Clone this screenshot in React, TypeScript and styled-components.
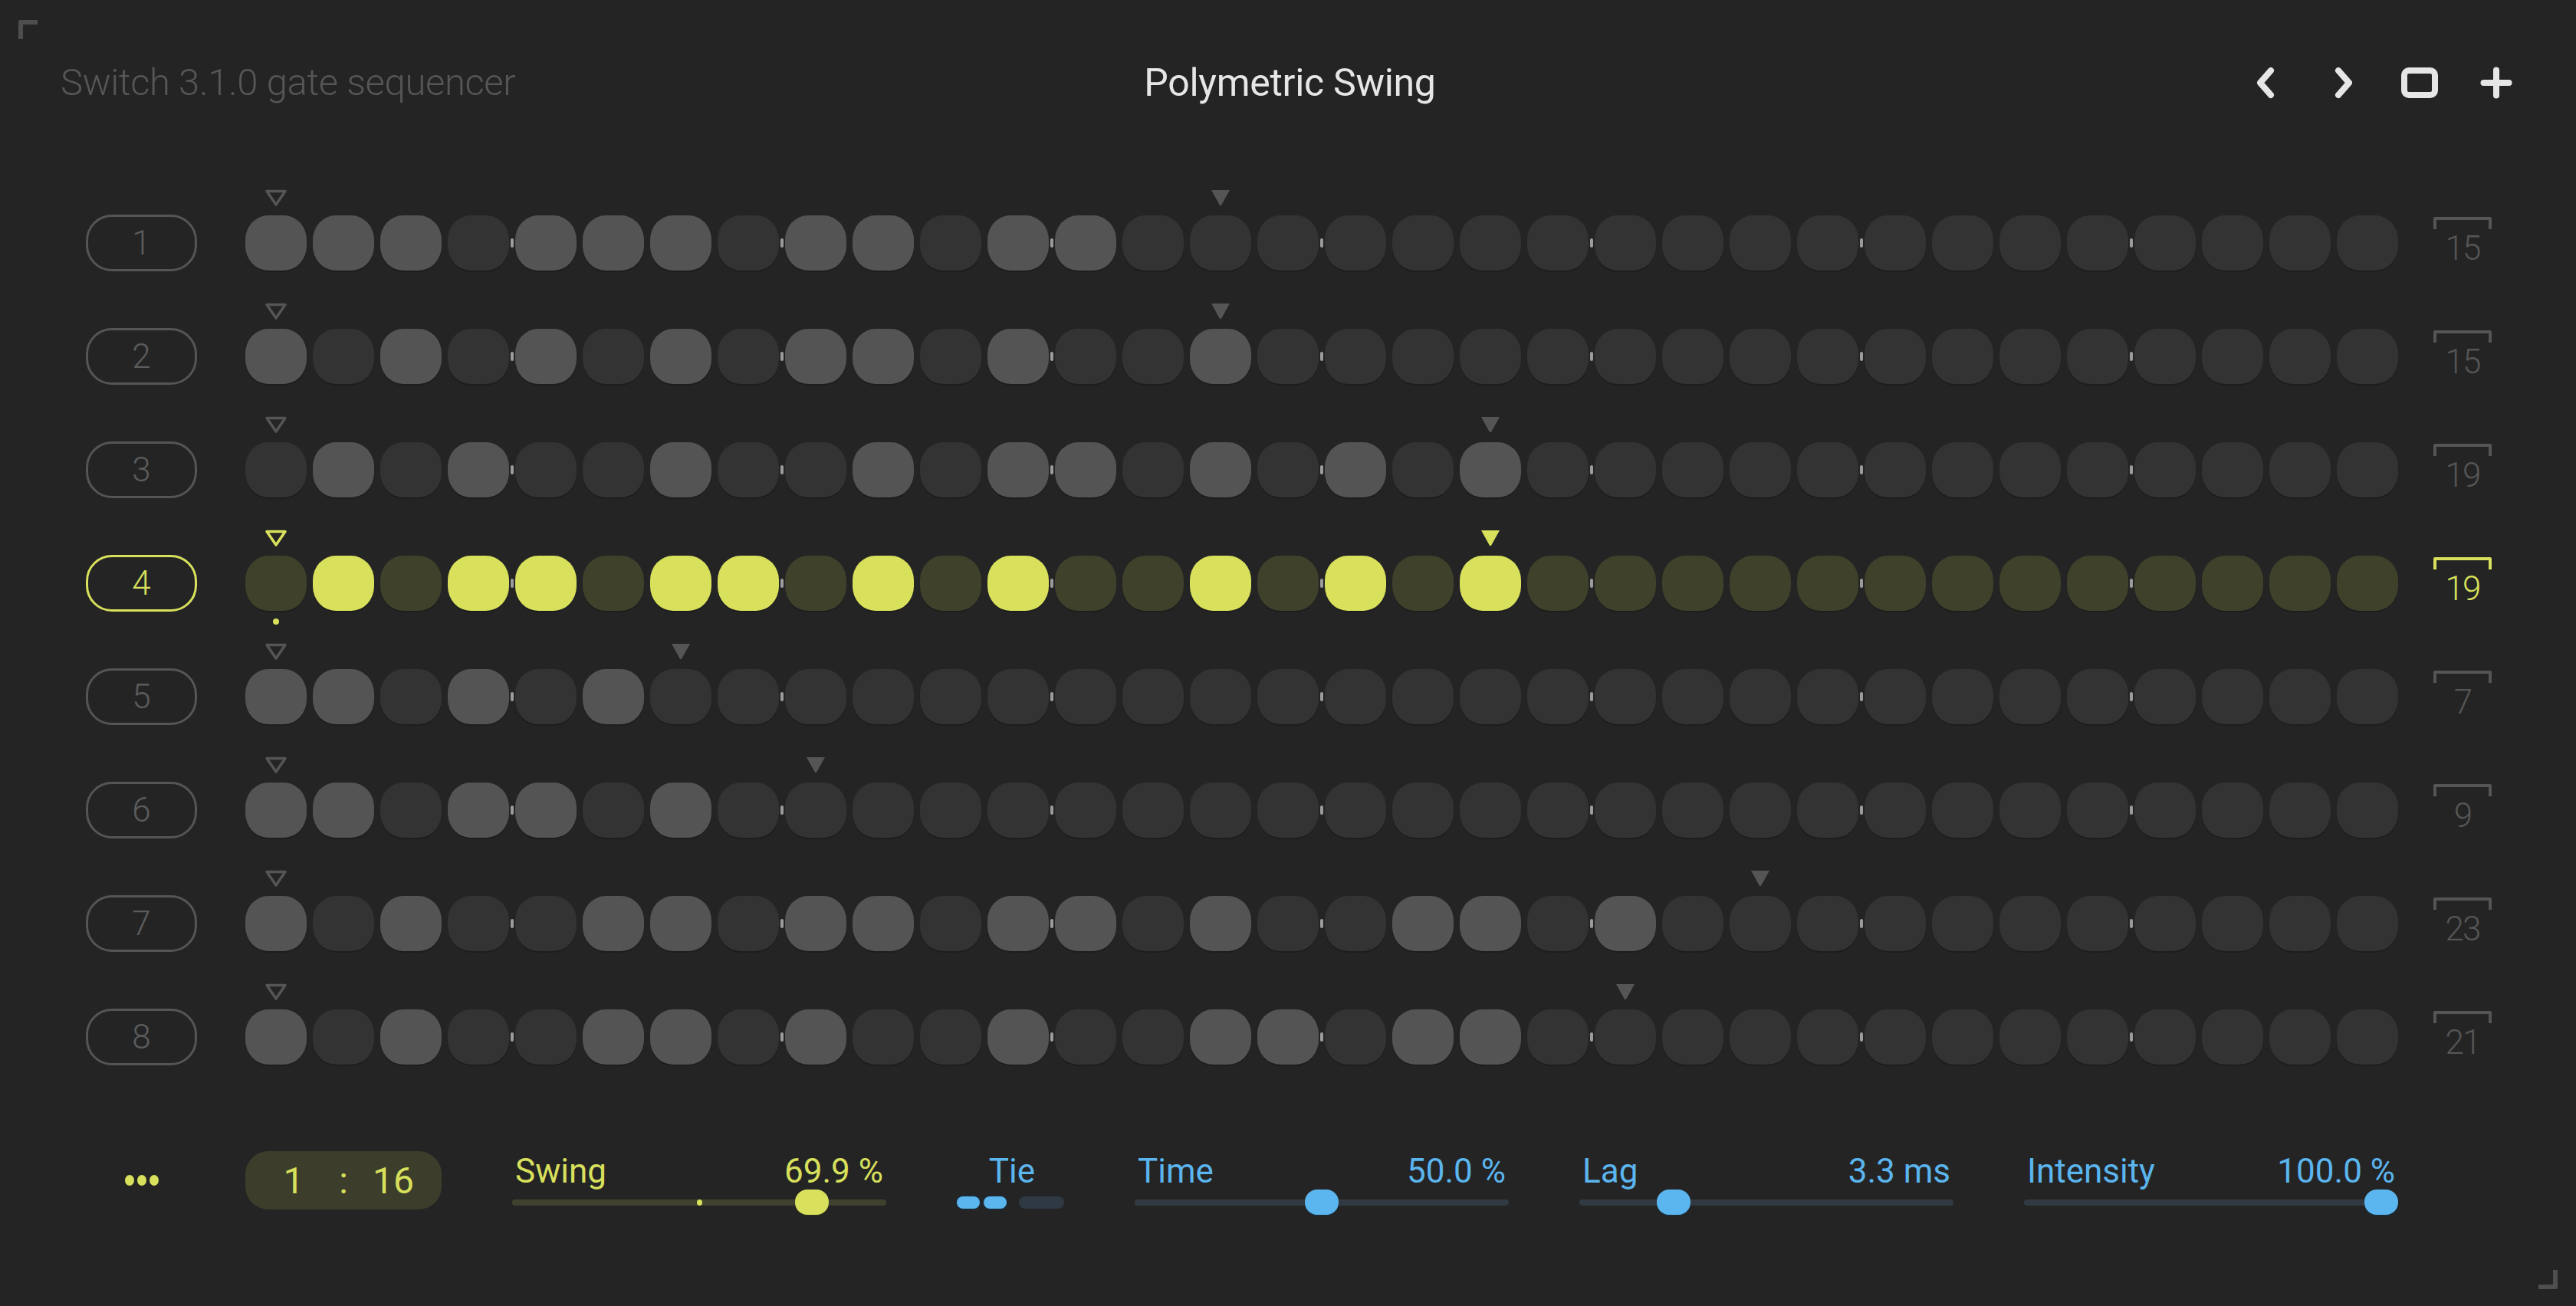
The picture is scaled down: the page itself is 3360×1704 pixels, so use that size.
import * as React from "react"
import styled, { createGlobalStyle, css } from "styled-components"

const YELLOW = "#d8e05c"
const OLIVE = "#3f412b"
const BLUE = "#5bb5ee"
const GRAY_ON = "#545454"
const GRAY_OFF = "#333333"
const DIM = "#555555"

const tracks = [
  { steps: "111011101101100", len: 15 },
  { steps: "101010101101001", len: 15 },
  { steps: "0101001001011010101", len: 19 },
  { steps: "0101101101010010101", len: 19, active: true },
  { steps: "1101010", len: 7 },
  { steps: "110110100", len: 9 },
  { steps: "10100110110110100110100", len: 23 },
  { steps: "101001101001001101100", len: 21 },
]

const GlobalStyle = createGlobalStyle`
  * { box-sizing: border-box; }
  body {
    margin: 0;
    background: #242424;
  }
`

function App() {
  return (
    <Page>
      <GlobalStyle />
      <CornerTL />
      <CornerBR />
      <Header>
        <Subtitle>Switch 3.1.0 gate sequencer</Subtitle>
        <Title>Polymetric Swing</Title>
        <Icons>
          <IconButton>
            <svg width="60" height="60" viewBox="0 0 60 60">
              <path d="M36 14 L22 30 L36 46" />
            </svg>
          </IconButton>
          <IconButton>
            <svg width="60" height="60" viewBox="0 0 60 60">
              <path d="M24 14 L38 30 L24 46" />
            </svg>
          </IconButton>
          <IconButton>
            <svg width="60" height="60" viewBox="0 0 60 60">
              <rect x="10" y="14" width="40" height="32" rx="6" />
            </svg>
          </IconButton>
          <IconButton>
            <svg width="60" height="60" viewBox="0 0 60 60">
              <path d="M13.5 30 H46.5 M30 13.5 V46.5" />
            </svg>
          </IconButton>
        </Icons>
      </Header>

      <Rows>
        {tracks.map((t, r) => {
          const cells = t.steps.padEnd(32, "0").split("")
          return (
            <Row key={r}>
              <TrackButton $active={t.active}>{r + 1}</TrackButton>
              <Steps>
                {cells.map((c, i) => (
                  <StepCol key={i}>
                    <MarkerSlot>
                      {i === 0 && (
                        <Triangle $active={t.active} viewBox="0 0 30 24">
                          <path d="M3 3.5 H27 L15 21 Z" fill="none" strokeWidth="3.5" strokeLinejoin="round" />
                        </Triangle>
                      )}
                      {i === t.len - 1 && (
                        <Triangle $active={t.active} viewBox="0 0 30 24">
                          <path d="M3 2 H27 L16.2 21.5 Q15 23 13.8 21.5 Z" stroke="none" />
                        </Triangle>
                      )}
                    </MarkerSlot>
                    <Cell $on={c === "1"} $active={t.active} $tick={i % 4 === 3 && i < 31} />
                    <BelowSlot>{t.active && i === 0 && <PlayDot />}</BelowSlot>
                  </StepCol>
                ))}
              </Steps>
              <LengthLabel $active={t.active}>
                <Bracket />
                <LengthNum>{t.len}</LengthNum>
              </LengthLabel>
            </Row>
          )
        })}
      </Rows>

      <BottomBar>
        <DotsCol>
          <Dot />
          <Dot />
          <Dot />
        </DotsCol>
        <Controls>
          <Counter>
            <span>1</span>
            <span>:</span>
            <span>16</span>
          </Counter>
          <Slider label="Swing" value="69.9 %" pct={0.83} tone="yellow" marker />
          <TieGroup>
            <TieLabel>Tie</TieLabel>
            <TieRow>
              <TieSeg $on />
              <TieSeg $on />
              <TieSeg $wide />
            </TieRow>
          </TieGroup>
          <Slider label="Time" value="50.0 %" pct={0.5} tone="blue" />
          <Slider label="Lag" value="3.3 ms" pct={0.228} tone="blue" />
          <Slider label="Intensity" value="100.0 %" pct={1} tone="blue" />
        </Controls>
      </BottomBar>
    </Page>
  )
}

type SliderProps = {
  label: string
  value: string
  pct: number
  tone: "yellow" | "blue"
  marker?: boolean
}

function Slider({ label, value, pct, tone, marker }: SliderProps) {
  return (
    <SliderGroup $tone={tone}>
      <SliderHead>
        <span>{label}</span>
        <span>{value}</span>
      </SliderHead>
      <TrackArea>
        <Track $tone={tone}>
          {marker && <CenterMark />}
        </Track>
        <Thumb $tone={tone} style={{ left: `calc(${pct} * (100% - 44px))` }} />
      </TrackArea>
    </SliderGroup>
  )
}

const Page = styled.div`
  position: relative;
  width: 3360px;
  height: 1704px;
  background: #242424;
  font-family: Roboto, "Liberation Sans", sans-serif;
  display: flex;
  flex-direction: column;
  overflow: hidden;
`

const CornerTL = styled.div`
  position: absolute;
  top: 26px;
  left: 24px;
  width: 25px;
  height: 25px;
  border-top: 6px solid #4e4e4e;
  border-left: 6px solid #4e4e4e;
  border-top-left-radius: 3px;
`

const CornerBR = styled.div`
  position: absolute;
  bottom: 22px;
  right: 24px;
  width: 25px;
  height: 25px;
  border-bottom: 6px solid #4e4e4e;
  border-right: 6px solid #4e4e4e;
  border-bottom-right-radius: 3px;
`

const Header = styled.div`
  height: 243px;
  padding: 0 74px 28px 79px;
  display: grid;
  grid-template-columns: 1fr auto 1fr;
  align-items: center;
`

const Subtitle = styled.div`
  justify-self: start;
  color: #565656;
  font-size: 49px;
  font-weight: 300;
  letter-spacing: -0.4px;
`

const Title = styled.div`
  color: #e6e6e6;
  font-size: 50px;
  font-weight: 400;
  letter-spacing: -0.3px;
`

const Icons = styled.div`
  justify-self: end;
  display: flex;
  gap: 40px;
`

const IconButton = styled.div`
  width: 60px;
  height: 60px;
  display: flex;
  align-items: center;
  justify-content: center;

  svg {
    fill: none;
    stroke: #e6e6e6;
    stroke-width: 8;
    stroke-linecap: round;
    stroke-linejoin: round;
  }
`

const Rows = styled.div`
  display: flex;
  flex-direction: column;
  padding-left: 112px;
`

const Row = styled.div`
  display: flex;
  align-items: center;
  height: 148px;
`

const TrackButton = styled.div<{ $active?: boolean }>`
  width: 145px;
  height: 74px;
  margin-right: 63px;
  border: 3px solid ${(p) => (p.$active ? YELLOW : DIM)};
  border-radius: 34px;
  color: ${(p) => (p.$active ? YELLOW : "#5c5c5c")};
  font-size: 44px;
  font-weight: 300;
  display: flex;
  align-items: center;
  justify-content: center;
`

const Steps = styled.div`
  display: flex;
  gap: 8px;
`

const StepCol = styled.div`
  width: 80px;
  height: 148px;
  display: flex;
  flex-direction: column;
  align-items: center;
`

const MarkerSlot = styled.div`
  height: 38px;
  width: 100%;
  display: flex;
  align-items: flex-end;
  justify-content: center;
  padding-bottom: 11px;
`

const Triangle = styled.svg<{ $active?: boolean }>`
  width: 30px;
  height: 24px;
  fill: ${(p) => (p.$active ? YELLOW : DIM)};
  stroke: ${(p) => (p.$active ? YELLOW : DIM)};
`

const Cell = styled.div<{ $on: boolean; $active?: boolean; $tick: boolean }>`
  position: relative;
  width: 80px;
  height: 72px;
  border-radius: 30px / 32px;
  background: ${(p) =>
    p.$active ? (p.$on ? YELLOW : OLIVE) : p.$on ? GRAY_ON : GRAY_OFF};
  box-shadow: 0 2px 0 rgba(0, 0, 0, 0.18);

  ${(p) =>
    p.$tick &&
    css`
      &::after {
        content: "";
        position: absolute;
        right: -6px;
        top: 30px;
        width: 4px;
        height: 12px;
        border-radius: 2px;
        background: #9c9c9c;
      }
    `}
`

const BelowSlot = styled.div`
  height: 38px;
  display: flex;
  justify-content: center;
  padding-top: 10px;
`

const PlayDot = styled.div`
  width: 8px;
  height: 8px;
  border-radius: 50%;
  background: ${YELLOW};
`

const LengthLabel = styled.div<{ $active?: boolean }>`
  width: 76px;
  margin-left: 46px;
  margin-bottom: 6px;
  display: flex;
  flex-direction: column;
  align-items: center;
  color: ${(p) => (p.$active ? YELLOW : DIM)};
`

const Bracket = styled.div`
  width: 76px;
  height: 16px;
  border: 4px solid currentColor;
  border-bottom: none;
  border-radius: 3px 3px 0 0;
`

const LengthNum = styled.div`
  margin-top: 3px;
  font-size: 44px;
  font-weight: 300;
  line-height: 1;
  letter-spacing: -2px;
`

const BottomBar = styled.div`
  display: flex;
  align-items: flex-start;
  padding: 75px 0 0 112px;
`

const DotsCol = styled.div`
  width: 145px;
  height: 76px;
  margin-right: 63px;
  display: flex;
  align-items: center;
  justify-content: center;
  gap: 4px;
`

const Dot = styled.div`
  width: 12px;
  height: 14px;
  border-radius: 50%;
  background: ${YELLOW};
`

const Controls = styled.div`
  display: flex;
  align-items: flex-start;
  gap: 92px;
`

const Counter = styled.div`
  width: 256px;
  height: 76px;
  border-radius: 30px;
  background: #3c3d2b;
  color: ${YELLOW};
  font-size: 48px;
  font-weight: 400;
  display: grid;
  grid-template-columns: 70px 60px 70px;
  justify-content: center;
  align-items: center;
  text-align: center;
`

const SliderGroup = styled.div<{ $tone: "yellow" | "blue" }>`
  width: 488px;
  margin-top: 2px;
  color: ${(p) => (p.$tone === "yellow" ? YELLOW : BLUE)};
`

const SliderHead = styled.div`
  display: flex;
  justify-content: space-between;
  font-size: 44px;
  line-height: 48px;
  padding: 0 4px;
`

const TrackArea = styled.div`
  position: relative;
  height: 34px;
  display: flex;
  align-items: center;
`

const Track = styled.div<{ $tone: "yellow" | "blue" }>`
  position: relative;
  width: 100%;
  height: 8px;
  border-radius: 4px;
  background: ${(p) => (p.$tone === "yellow" ? "#40422f" : "#313a42")};
`

const CenterMark = styled.div`
  position: absolute;
  left: calc(50% - 3px);
  top: 0;
  width: 7px;
  height: 8px;
  border-radius: 50%;
  background: ${YELLOW};
`

const Thumb = styled.div<{ $tone: "yellow" | "blue" }>`
  position: absolute;
  top: 0;
  width: 44px;
  height: 33px;
  border-radius: 16px;
  background: ${(p) => (p.$tone === "yellow" ? YELLOW : BLUE)};
  box-shadow: 0 2px 0 ${(p) => (p.$tone === "yellow" ? "#2a2b1e" : "#1c2a36")};
`

const TieGroup = styled.div`
  width: 140px;
  margin-top: 2px;
  display: flex;
  flex-direction: column;
  align-items: center;
  color: ${BLUE};
`

const TieLabel = styled.div`
  font-size: 44px;
  line-height: 48px;
  padding-left: 4px;
`

const TieRow = styled.div`
  height: 34px;
  width: 100%;
  display: flex;
  align-items: center;
  gap: 5px;
`

const TieSeg = styled.div<{ $on?: boolean; $wide?: boolean }>`
  width: ${(p) => (p.$wide ? "59px" : "30px")};
  height: 16px;
  margin-left: ${(p) => (p.$wide ? "11px" : "0")};
  border-radius: 8px;
  background: ${(p) => (p.$on ? BLUE : "#2f3943")};
  box-shadow: ${(p) => (p.$on ? "0 0 0 2px #1d2935" : "none")};
`

export default App
